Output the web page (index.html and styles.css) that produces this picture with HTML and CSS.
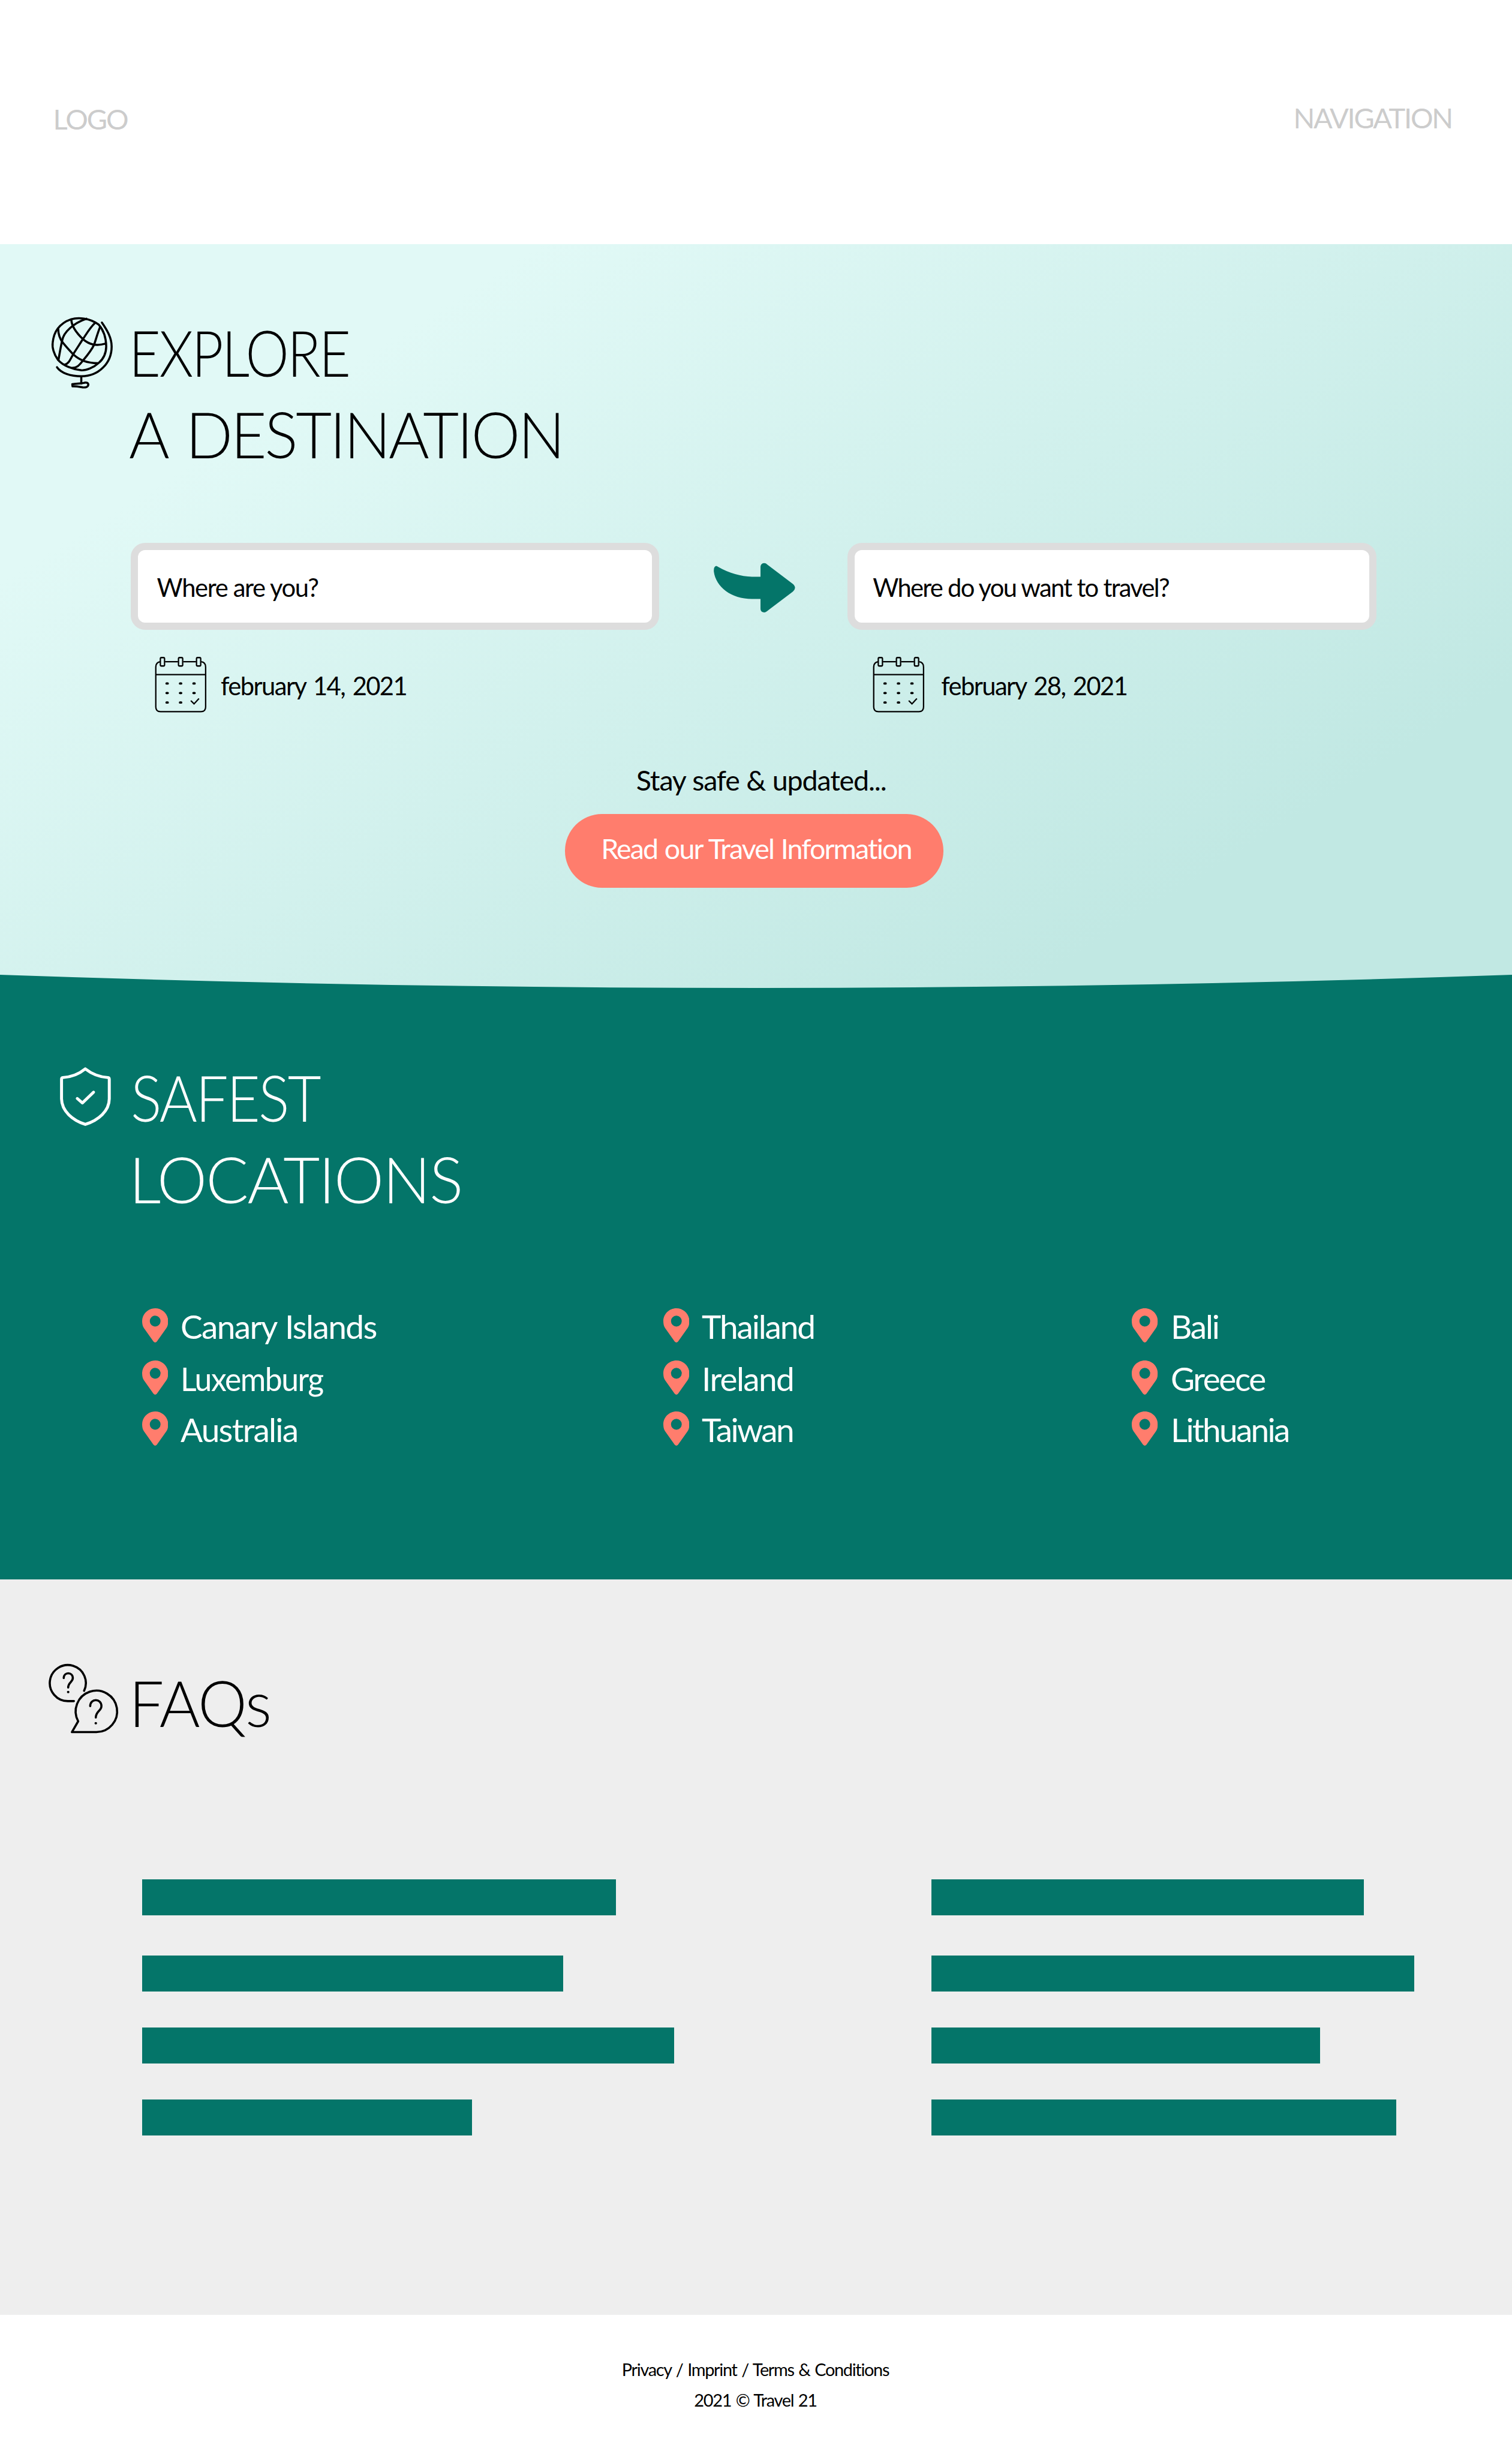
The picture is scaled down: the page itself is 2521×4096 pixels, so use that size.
FILE: index.html
```html
<!DOCTYPE html>
<html lang="en">
<head>
<meta charset="utf-8">
<title>Travel 21</title>
<link rel="stylesheet" href="styles.css">
</head>
<body>
<svg class="sprite" aria-hidden="true">
  <symbol id="calendar" viewBox="0 0 540 600">
    <g fill="none" stroke="#000" stroke-width="11">
      <path d="M99 107Q62 112 62 150V474Q62 512 100 512H428Q466 512 466 474V150Q466 112 430 107M62 212H466M137 107H242M285 107H388"/>
      <rect x="99" y="74" width="34" height="68" rx="9"/>
      <rect x="246" y="74" width="34" height="68" rx="9"/>
      <rect x="392" y="74" width="34" height="68" rx="9"/>
      <path d="M346 423L372 449L412 406"/>
    </g>
    <path d="M149 284h10M258 284h10M367 284h10M149 361h10M258 361h10M367 361h10M149 438h10M258 438h10" stroke="#000" stroke-width="18" stroke-linecap="round"/>
  </symbol>
  <symbol id="pin" viewBox="0 0 70.3 92.3">
    <path fill="#ff7d6d" fill-rule="evenodd" d="M35.2 0C54.6 0 70.3 15.5 70.3 34.6C70.3 41.5 69 49 65.5 53.5L40 89.5Q35.2 95 30.4 89.5L4.8 53.5C1.3 49 0 41.5 0 34.6C0 15.5 15.7 0 35.2 0ZM35.2 20a14.6 14.6 0 1 0 0 29.2a14.6 14.6 0 1 0 0-29.2Z"/>
  </symbol>
</svg>

<header class="header">
  <a class="logo">LOGO</a>
  <nav class="nav">NAVIGATION</nav>
</header>

<section class="hero">
  <div class="title-row">
    <div class="title-icon">
      <svg class="icon-globe" viewBox="0 0 600 660" fill="none" stroke="#000" stroke-width="17" stroke-linecap="round" stroke-linejoin="round">
        <path d="M215 65C270 48 370 52 440 108C490 165 500 230 501 285C500 345 480 385 440 418C400 455 340 480 300 478C230 470 150 440 110 393C75 345 62 290 67 255C72 210 85 170 108 140C135 105 170 80 215 65Z"/>
        <path d="M340 60C240 95 155 165 143 240C130 300 122 350 114 393M412 92C370 130 340 185 312 225C290 260 260 305 232 350C205 400 195 425 165 432M452 125C430 180 420 220 403 270C385 310 350 355 310 402C280 440 260 460 225 458"/>
        <path d="M218 66C220 120 265 180 312 225C360 265 410 285 495 262M112 140C112 190 130 230 150 255C175 285 200 315 235 350C285 395 340 418 435 420"/>
        <path d="M466 91C510 155 545 215 545 285C545 420 440 526 300 526C210 526 135 500 102 453M299 526V585"/>
        <path d="M226 590C270 585 300 585 318 580C340 573 356 580 356 595C354 615 330 618 310 616C285 612 260 606 228 608Z"/>
      </svg>
    </div>
    <h1 class="title"><span class="t-explore">EXPLORE</span><span class="t-destination">A DESTINATION</span></h1>
  </div>

  <div class="search">
    <div class="field">Where are you?</div>
    <svg class="arrow" viewBox="0 0 240 160"><path fill="#047569" d="M20 21Q13.500 15 9.500 23Q8 27 8.500 34C14 75 55 107.700 111.500 107.700H134.500V134Q135 144 145 144Q149 144 153 140L222 88Q227.800 83 227.800 77.700Q227.800 72 222 67L153 15Q149 11 145 11Q135 11 134.500 21V47.700H111.500C82 47 50 38 20 21Z"/></svg>
    <div class="field field-to">Where do you want to travel?</div>
  </div>
  <div class="dates">
    <div class="date"><svg class="icon-calendar"><use href="#calendar"/></svg><span>february 14, 2021</span></div>
    <div class="date date-back"><svg class="icon-calendar"><use href="#calendar"/></svg><span>february 28, 2021</span></div>
  </div>

  <p class="updated">Stay safe &amp; updated...</p>
  <a class="button">Read our Travel Information</a>
  <svg class="curve" viewBox="0 0 2521 24" preserveAspectRatio="none"><path fill="#047569" d="M0 1Q1260.500 45 2521 1V24H0Z"/></svg>
</section>

<section class="safest">
  <div class="title-row">
    <div class="title-icon">
      <svg class="icon-shield" viewBox="0 0 160 180" fill="none" stroke="#fff" stroke-width="8" stroke-linejoin="round" stroke-linecap="round">
        <path d="M79.700 16C65 28 45 38 19 39.500Q15.500 40 15.500 44V97C16 130 45 155 79.700 166C115 155 144.500 130 144.500 97V44Q144.500 40 141 39.500C115 38 95 28 79.700 16Z"/>
        <path d="M58 96L71.800 108L102 79"/>
      </svg>
    </div>
    <h2 class="title"><span class="t-safest">SAFEST</span><span class="t-locations">LOCATIONS</span></h2>
  </div>
  <div class="places">
    <ul class="place-list">
      <li><svg class="pin"><use href="#pin"/></svg><span class="p-canary">Canary Islands</span></li>
      <li><svg class="pin"><use href="#pin"/></svg><span class="p-luxemburg">Luxemburg</span></li>
      <li><svg class="pin"><use href="#pin"/></svg><span class="p-australia">Australia</span></li>
    </ul>
    <ul class="place-list">
      <li><svg class="pin"><use href="#pin"/></svg><span class="p-thailand">Thailand</span></li>
      <li><svg class="pin"><use href="#pin"/></svg><span class="p-ireland">Ireland</span></li>
      <li><svg class="pin"><use href="#pin"/></svg><span class="p-taiwan">Taiwan</span></li>
    </ul>
    <ul class="place-list">
      <li><svg class="pin"><use href="#pin"/></svg><span class="p-bali">Bali</span></li>
      <li><svg class="pin"><use href="#pin"/></svg><span class="p-greece">Greece</span></li>
      <li><svg class="pin"><use href="#pin"/></svg><span class="p-lithuania">Lithuania</span></li>
    </ul>
  </div>
</section>

<section class="faqs">
  <div class="title-row">
    <div class="title-icon">
      <svg class="icon-faq" viewBox="0 0 220 220" fill="none" stroke="#000" stroke-width="5.800" stroke-linecap="round" stroke-linejoin="round">
        <path d="M117 96.700A48.700 48.700 0 1 0 73.200 124.500H89.500"/>
        <path d="M84 208.300H150A56 56 0 1 0 101 179Z"/>
        <path d="M62 62.500C62 45 86.500 45 86.500 62.500C86.500 73 74 74 74 88M133.500 138C133.500 116.500 163.800 116.500 163.800 138C163.800 151 148.600 152 148.600 169"/>
        <g fill="#000" stroke="none"><circle cx="74" cy="100" r="3.400"/><circle cx="148.600" cy="184.300" r="3.400"/></g>
      </svg>
    </div>
    <h2 class="title"><span class="t-faqs">FAQs</span></h2>
  </div>
  <div class="bars">
    <div class="bar-list">
      <div class="bar" style="width:790px"></div>
      <div class="bar" style="width:702px"></div>
      <div class="bar" style="width:887px"></div>
      <div class="bar" style="width:550px"></div>
    </div>
    <div class="bar-list">
      <div class="bar" style="width:721px"></div>
      <div class="bar" style="width:805px"></div>
      <div class="bar" style="width:648px"></div>
      <div class="bar" style="width:775px"></div>
    </div>
  </div>
</section>

<footer class="footer">
  <p>Privacy / Imprint / Terms &amp; Conditions</p>
  <p>2021 © Travel 21</p>
</footer>
</body>
</html>
```
FILE: styles.css
```css
* { box-sizing: border-box; }

body {
  margin: 0;
  width: 2521px;
  height: 4096px;
  overflow: hidden;
  background: #fff;
  color: #000;
  font-family: Lato, "Open Sans", sans-serif;
  font-variant-ligatures: none;
}
h1, h2, p, ul { margin: 0; padding: 0; }
svg { display: block; flex: none; }
span { white-space: nowrap; }

.sprite { width: 0; height: 0; float: left; }

/* Header */
.header {
  height: 407px;
  padding: 170px 100px 0 88.600px;
  display: flex;
  justify-content: space-between;
  font-size: 47px;
  line-height: 56px;
  color: #ccc;
}
.logo { letter-spacing: -2px; }
.nav { letter-spacing: -2.250px; margin-top: -2.500px; }

/* Section titles */
.title-row { display: flex; align-items: flex-start; }
.title-icon { width: 214.500px; flex: none; }
.title {
  display: flex;
  flex-direction: column;
  align-items: flex-start;
  font-size: 107px;
  font-weight: 300;
  line-height: 135.600px;
}
.title span { transform-origin: 0 0; }
.t-explore { letter-spacing: -3px; transform: scaleX(.853); }
.t-destination { letter-spacing: -3.500px; word-spacing: 9px; transform: scaleX(.967); }
.t-safest { letter-spacing: -3px; margin-left: 3px; transform: scaleX(.900); }
.t-locations { letter-spacing: -2px; transform: scaleX(.985); }
.t-faqs { letter-spacing: -2px; transform: scaleX(.967); }

/* Hero */
.hero {
  height: 1241px;
  padding-top: 112.200px;
  display: flex;
  flex-direction: column;
  background: linear-gradient(148deg, #e1f9f6 20%, #c1e8e3 82%);
}
.icon-globe { width: 123.500px; height: 135.800px; margin: -.700px 0 0 74.100px; }

.search {
  display: flex;
  align-items: flex-start;
  margin-top: 114.600px;
  padding-left: 217.600px;
}
.field {
  width: 881.500px;
  height: 145.500px;
  flex: none;
  border: 12.300px solid #ddd;
  border-radius: 24px;
  background: #fff;
  padding: 37px 0 0 32px;
  font-size: 41.700px;
  line-height: 50px;
  letter-spacing: -1.350px;
}
.field-to { padding-left: 30px; letter-spacing: -1.720px; }
.arrow { width: 148.100px; height: 98.800px; margin: 27.100px 79.700px 0 86.300px; }

.dates {
  display: flex;
  margin-top: 30.300px;
  padding-left: 246.900px;
}
.date {
  width: 1197.600px;
  display: flex;
  gap: 10px;
  font-size: 41.700px;
  line-height: 50px;
  letter-spacing: -1.580px;
  word-spacing: 3.500px;
}
.date-back { width: auto; gap: 13.600px; }
.date span { margin-top: 37px; }
.icon-calendar { width: 111.100px; height: 123.500px; }

.updated {
  margin: 68.200px 0 0 1060.800px;
  font-size: 46.600px;
  line-height: 56px;
  letter-spacing: -1.160px;
  word-spacing: .800px;
}
.button {
  width: 631px;
  height: 123.500px;
  margin: 28.300px 0 0 941.800px;
  padding: 29.100px 0 0 60.500px;
  border-radius: 62px;
  background: #ff7d6d;
  color: #fff;
  font-size: 46.600px;
  line-height: 56px;
  letter-spacing: -1.880px;
  word-spacing: 1.500px;
  white-space: nowrap;
}
.curve { width: 100%; height: 24px; margin-top: auto; }

/* Safest locations */
.safest {
  height: 985px;
  padding-top: 113.200px;
  background: #047569;
  color: #fff;
}
.icon-shield { width: 98.800px; height: 111.100px; margin: 10.400px 0 0 92.600px; }

.places {
  display: grid;
  grid-template-columns: 869.200px 781.800px auto;
  margin-top: 146px;
  padding-left: 236.500px;
}
.place-list {
  list-style: none;
  display: grid;
  grid-template-rows: 86.600px 85.300px 66px;
  font-size: 55px;
  line-height: 66px;
}
.place-list li { display: flex; gap: 21px; }
.place-list span { transform-origin: 0 0; }
.pin { width: 43.400px; height: 57px; margin-top: 3px; }
.p-canary { letter-spacing: -1.600px; word-spacing: 2px; }
.p-luxemburg { letter-spacing: -1.600px; transform: scaleX(.940); }
.p-australia { letter-spacing: -1.740px; }
.p-thailand { letter-spacing: -2.150px; }
.p-ireland { letter-spacing: -1.670px; }
.p-taiwan { letter-spacing: -2.600px; }
.p-bali { letter-spacing: -2.200px; }
.p-greece { letter-spacing: -2.400px; }
.p-lithuania { letter-spacing: -2.700px; }

/* FAQs */
.faqs {
  height: 1225.700px;
  padding-top: 136.900px;
  background: #eee;
}
.icon-faq { width: 135.800px; height: 135.800px; margin: -10.500px 0 0 67.900px; }
.bars {
  display: grid;
  grid-template-columns: 1316px auto;
  margin-top: 227.500px;
  padding-left: 237px;
}
.bar-list { display: grid; grid-template-rows: 127px 120px 120px 60px; }
.bar { height: 60.300px; background: #047569; }

/* Footer */
.footer {
  padding: 73.200px 2px 0 0;
  font-size: 28.900px;
  line-height: 35px;
  letter-spacing: -1.300px;
  word-spacing: 1.500px;
  text-align: center;
}
.footer p + p { margin-top: 16.400px; }
```
